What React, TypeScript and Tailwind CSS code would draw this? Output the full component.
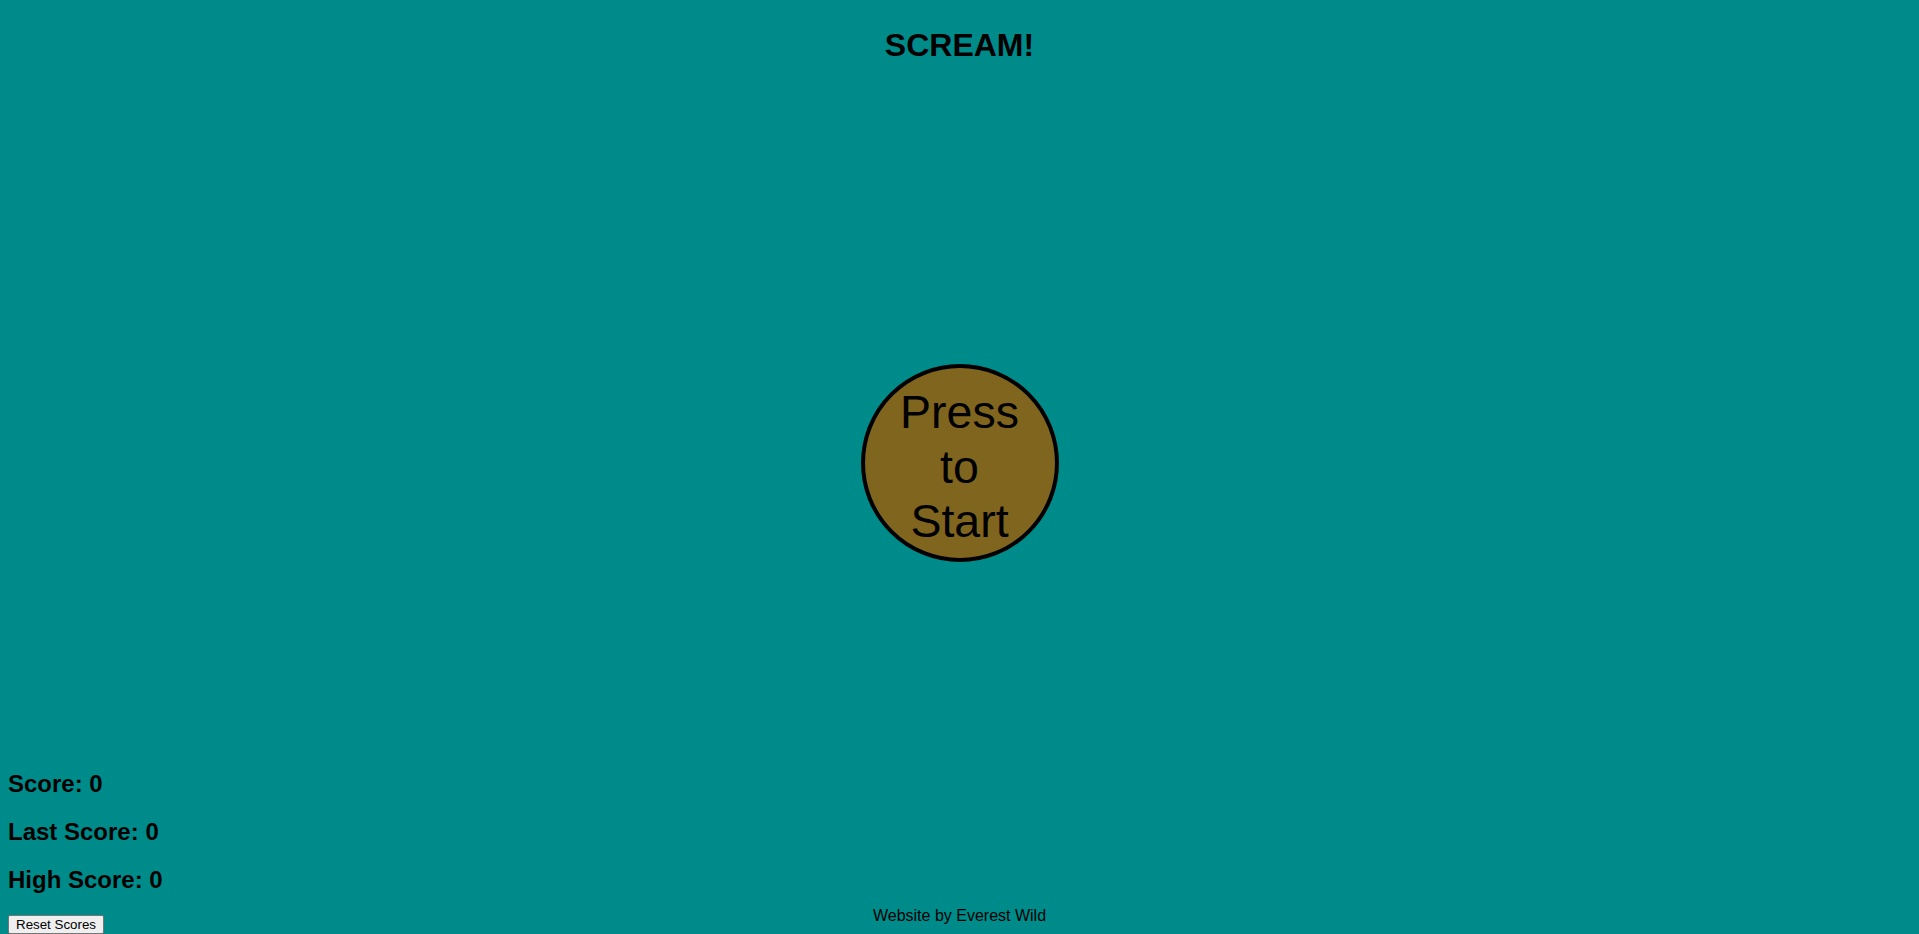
import React from "react";

export default function App() {
  return (
    <div
      className="w-full h-[934px] bg-[#008b8b] text-black flex flex-col overflow-hidden"
      style={{ fontFamily: '"Liberation Sans", Arial, sans-serif' }}
    >
      <h1 className="mt-[27px] text-center text-[32px] leading-[37px] font-bold">SCREAM!</h1>

      <div className="flex justify-center mt-[300px]">
        <button className="w-[198px] h-[198px] rounded-full border-[4.5px] border-black bg-[#80651f] flex flex-col items-center justify-start pt-[17px] text-[46.5px] leading-[54.5px] text-black cursor-pointer">
          <span>Press</span>
          <span>to</span>
          <span>Start</span>
        </button>
      </div>

      <div className="flex-1" />

      <div className="grid grid-cols-[1fr_auto_1fr] items-end">
        <div className="flex flex-col items-start pl-2">
          <h2 className="text-[24px] leading-[27.6px] font-bold mb-[20px]">Score: 0</h2>
          <h2 className="text-[24px] leading-[27.6px] font-bold mb-[20px]">Last Score: 0</h2>
          <h2 className="text-[24px] leading-[27.6px] font-bold mb-[21.5px]">High Score: 0</h2>
          <button className="px-[7px] py-[1px] border border-[#767676] bg-[#efefef] rounded-[2px] text-[13.33px] leading-[15.3px] text-black">
            Reset Scores
          </button>
        </div>
        <div className="pb-[9px] text-[16px] leading-[18.4px] text-center whitespace-nowrap">
          Website by Everest Wild
        </div>
        <div />
      </div>
    </div>
  );
}
